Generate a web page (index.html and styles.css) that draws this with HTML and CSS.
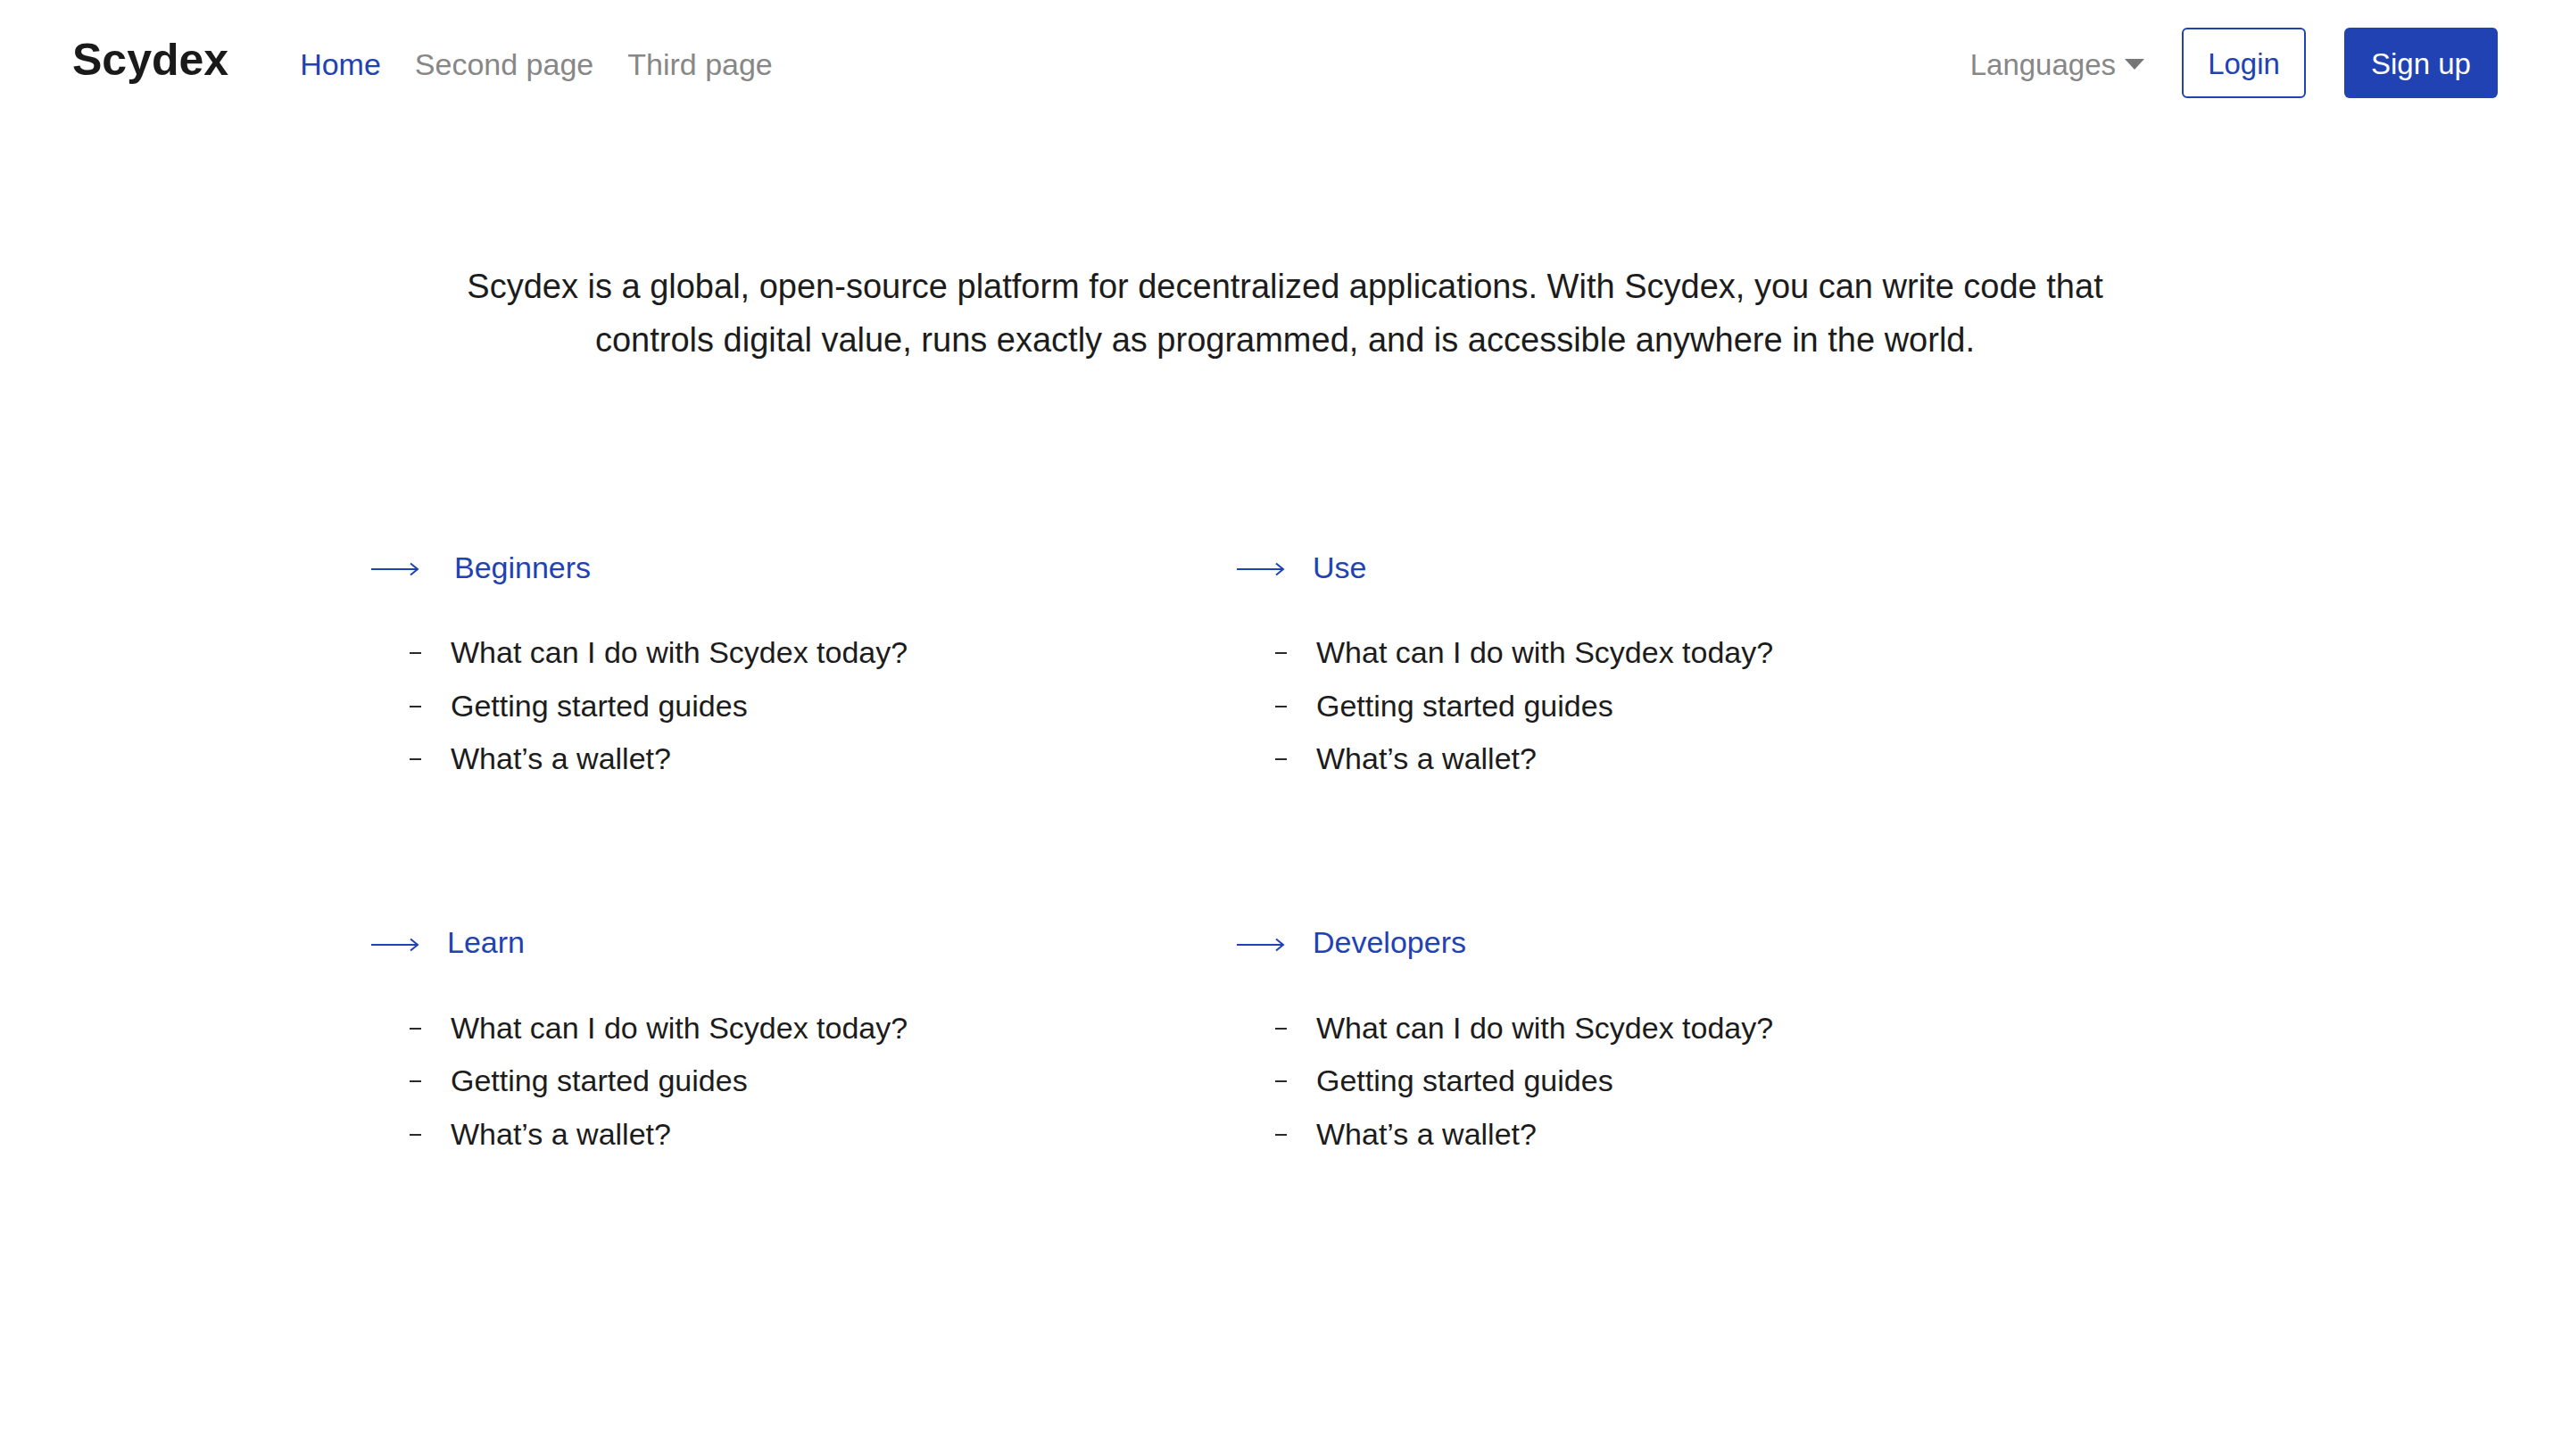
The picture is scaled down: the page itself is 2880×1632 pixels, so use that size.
FILE: index.html
```html
<!DOCTYPE html>
<html lang="en">
<head>
<meta charset="utf-8">
<title>Scydex</title>
<link rel="stylesheet" href="styles.css">
</head>
<body>
<header class="topbar">
  <div class="brand">Scydex</div>
  <nav class="mainnav">
    <a class="navlink active" href="#">Home</a>
    <a class="navlink" href="#">Second page</a>
    <a class="navlink" href="#">Third page</a>
  </nav>
  <div class="actions">
    <div class="lang">Languages<span class="caret"></span></div>
    <a class="btn btn-outline" href="#">Login</a>
    <a class="btn btn-solid" href="#">Sign up</a>
  </div>
</header>

<main>
  <p class="intro">Scydex is a global, open-source platform for decentralized applications. With Scydex, you can write code that controls digital value, runs exactly as programmed, and is accessible anywhere in the world.</p>

  <section class="topics">
    <div class="topic">
      <div class="topic-head">
        <svg class="arrow" width="56" height="16" viewBox="0 0 56 16"><line x1="1" y1="8" x2="53" y2="8" stroke="#2142b3" stroke-width="2.2"/><polyline points="45,1.5 53,8 45,14.5" fill="none" stroke="#2142b3" stroke-width="2"/></svg>
        <a class="topic-title wide" href="#">Beginners</a>
      </div>
      <ul class="topic-list">
        <li>What can I do with Scydex today?</li>
        <li>Getting started guides</li>
        <li>What’s a wallet?</li>
      </ul>
    </div>
    <div class="topic">
      <div class="topic-head">
        <svg class="arrow" width="56" height="16" viewBox="0 0 56 16"><line x1="1" y1="8" x2="53" y2="8" stroke="#2142b3" stroke-width="2.2"/><polyline points="45,1.5 53,8 45,14.5" fill="none" stroke="#2142b3" stroke-width="2"/></svg>
        <a class="topic-title" href="#">Use</a>
      </div>
      <ul class="topic-list">
        <li>What can I do with Scydex today?</li>
        <li>Getting started guides</li>
        <li>What’s a wallet?</li>
      </ul>
    </div>
    <div class="topic">
      <div class="topic-head">
        <svg class="arrow" width="56" height="16" viewBox="0 0 56 16"><line x1="1" y1="8" x2="53" y2="8" stroke="#2142b3" stroke-width="2.2"/><polyline points="45,1.5 53,8 45,14.5" fill="none" stroke="#2142b3" stroke-width="2"/></svg>
        <a class="topic-title" href="#">Learn</a>
      </div>
      <ul class="topic-list">
        <li>What can I do with Scydex today?</li>
        <li>Getting started guides</li>
        <li>What’s a wallet?</li>
      </ul>
    </div>
    <div class="topic">
      <div class="topic-head">
        <svg class="arrow" width="56" height="16" viewBox="0 0 56 16"><line x1="1" y1="8" x2="53" y2="8" stroke="#2142b3" stroke-width="2.2"/><polyline points="45,1.5 53,8 45,14.5" fill="none" stroke="#2142b3" stroke-width="2"/></svg>
        <a class="topic-title" href="#">Developers</a>
      </div>
      <ul class="topic-list">
        <li>What can I do with Scydex today?</li>
        <li>Getting started guides</li>
        <li>What’s a wallet?</li>
      </ul>
    </div>
  </section>
</main>
</body>
</html>
```

FILE: styles.css
```css
* { box-sizing: border-box; }

html, body {
  margin: 0;
  padding: 0;
  background: #ffffff;
}

body {
  font-family: "Liberation Sans", Arial, sans-serif;
  color: #1c1c1c;
}

a { text-decoration: none; }

.topbar {
  display: flex;
  align-items: center;
  padding: 31px 81px 0 81px;
  height: 110px;
}

.brand {
  font-size: 50px;
  font-weight: 700;
  color: #1a1a1a;
  margin-top: -8px;
}

.mainnav {
  display: flex;
  gap: 38px;
  margin-left: 80px;
  margin-top: 4px;
}

.navlink {
  font-size: 34px;
  color: #878787;
}

.navlink.active {
  color: #2142b3;
}

.actions {
  margin-left: auto;
  display: flex;
  align-items: center;
}

.lang {
  display: flex;
  align-items: center;
  font-size: 33px;
  color: #878787;
  margin-right: 42px;
  margin-top: 4px;
}

.caret {
  display: inline-block;
  width: 0;
  height: 0;
  margin-left: 10px;
  margin-top: -2px;
  border-left: 11px solid transparent;
  border-right: 11px solid transparent;
  border-top: 12px solid #767676;
}

.btn {
  display: flex;
  align-items: center;
  justify-content: center;
  height: 79px;
  padding-top: 3px;
  font-size: 33px;
  border-radius: 6px;
}

.btn-outline {
  width: 139px;
  border: 2px solid #2142b3;
  color: #2142b3;
  margin-right: 43px;
}

.btn-solid {
  width: 172px;
  background: #2142b3;
  color: #ffffff;
}

.intro {
  max-width: 1900px;
  margin: 181px auto 0 auto;
  text-align: center;
  font-size: 38px;
  line-height: 60px;
  color: #1c1c1c;
}

.topics {
  display: grid;
  grid-template-columns: 970px 970px;
  row-gap: 146px;
  margin: 195px 0 0 415px;
}

.topic-head {
  display: flex;
  align-items: center;
  height: 60px;
}

.arrow {
  display: block;
  margin-top: 4px;
}

.topic-title {
  font-size: 34px;
  color: #2142b3;
  margin-left: 30px;
}

.topic-title.wide {
  margin-left: 38px;
}

.topic-list {
  list-style: none;
  margin: 36px 0 0 0;
  padding: 0 0 0 90px;
}

.topic-list li {
  position: relative;
  font-size: 34px;
  line-height: 59.5px;
  color: #1c1c1c;
}

.topic-list li::before {
  content: "";
  position: absolute;
  left: -46px;
  top: 29px;
  width: 13px;
  height: 2px;
  background: #2a2a2a;
}
```
